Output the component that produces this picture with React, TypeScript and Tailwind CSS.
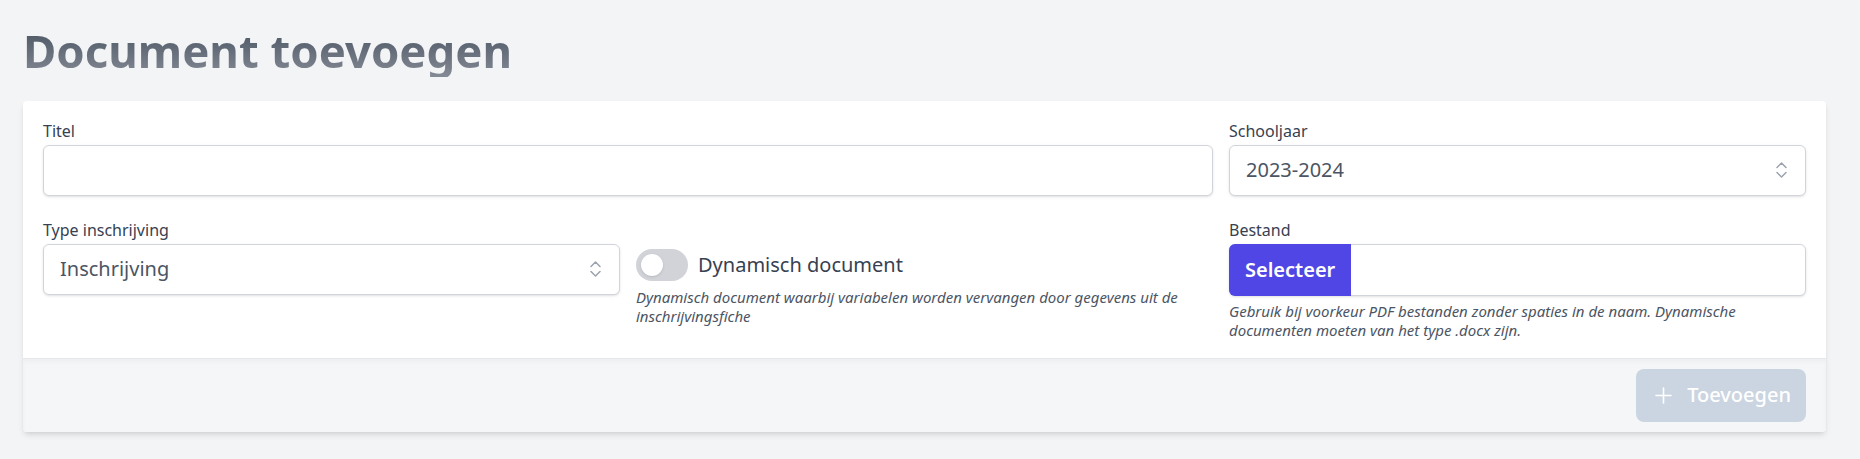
import React from "react";

const Chevrons = () => (
  <svg width="11" height="16" viewBox="0 0 11 16" fill="none" stroke="#9ca3af" strokeWidth="1.5" strokeLinecap="round" strokeLinejoin="round">
    <path d="M1 5.5L5.5 1L10 5.5" />
    <path d="M1 10.5L5.5 15L10 10.5" />
  </svg>
);

const PlusIcon = () => (
  <svg width="17" height="17" viewBox="0 0 17 17" fill="none" stroke="currentColor" strokeWidth="1.6" strokeLinecap="round">
    <path d="M8.5 1v15M1 8.5h15" />
  </svg>
);

const Label = ({ children }: { children: React.ReactNode }) => (
  <label className="block text-base leading-6 text-[#374151] -mt-0.5 mb-0.5">{children}</label>
);

const FakeSelect = ({ value }: { value: string }) => (
  <div className="flex h-[51px] items-center justify-between rounded-md border border-[#d1d5db] bg-white pl-4 pr-[18px] shadow-sm">
    <span className="text-xl text-[#4b5563]">{value}</span>
    <Chevrons />
  </div>
);

export default function App() {
  return (
    <div className="min-h-screen bg-[#f3f4f6] pl-[23px] pr-[34px] pt-[28px] font-['Noto_Sans',sans-serif]">
      <h1 className="bg-gradient-to-b from-[#4b5563] to-[#858b96] bg-clip-text pb-[3px] text-[45.5px] leading-none font-bold text-transparent">
        Document toevoegen
      </h1>

      <div className="mt-[24px] overflow-hidden rounded bg-white shadow-md">
        {/* Form */}
        <div className="grid grid-cols-3 gap-x-4 gap-y-6 px-5 pt-5 pb-[18px]">
          <div className="col-span-2">
            <Label>Titel</Label>
            <input
              type="text"
              className="block h-[51px] w-full rounded-md border border-[#d1d5db] bg-white px-4 text-xl shadow-sm outline-none"
            />
          </div>
          <div>
            <Label>Schooljaar</Label>
            <FakeSelect value="2023-2024" />
          </div>

          <div>
            <Label>Type inschrijving</Label>
            <FakeSelect value="Inschrijving" />
          </div>
          <div className="pt-[29px]">
            <div className="flex items-center gap-[10px]">
              <div className="flex h-8 w-[52px] items-center rounded-full bg-[#d1d3d9] px-[5px]">
                <div className="h-[22px] w-[22px] rounded-full bg-white shadow-sm" />
              </div>
              <span className="text-xl text-[#374151]">Dynamisch document</span>
            </div>
            <p className="mt-[7px] text-[15px] leading-[19px] text-[#4b5563] italic">
              Dynamisch document waarbij variabelen worden vervangen door gegevens uit de inschrijvingsfiche
            </p>
          </div>
          <div>
            <Label>Bestand</Label>
            <div className="flex h-[52px] rounded-md border border-[#d1d5db] bg-white shadow-sm">
              <button className="-my-px -ml-px rounded-l-md bg-[#4f46e5] px-4 text-xl font-semibold text-white">Selecteer</button>
              <div className="flex-1" />
            </div>
            <p className="mt-[6px] text-[15px] leading-[19px] text-[#4b5563] italic">
              Gebruik bij voorkeur PDF bestanden zonder spaties in de naam. Dynamische documenten moeten van het type .docx zijn.
            </p>
          </div>
        </div>

        {/* Footer */}
        <div className="flex justify-end border-t border-[#e5e7eb] bg-[#f5f6f8] px-5 py-[10px] shadow-[inset_0_3px_4px_rgba(0,0,0,0.03)]">
          <button className="flex h-[53px] items-center gap-[15px] rounded-lg bg-[#cbd5e1] pl-[19px] pr-[15px] text-xl font-medium text-white">
            <PlusIcon />
            Toevoegen
          </button>
        </div>
      </div>
    </div>
  );
}
